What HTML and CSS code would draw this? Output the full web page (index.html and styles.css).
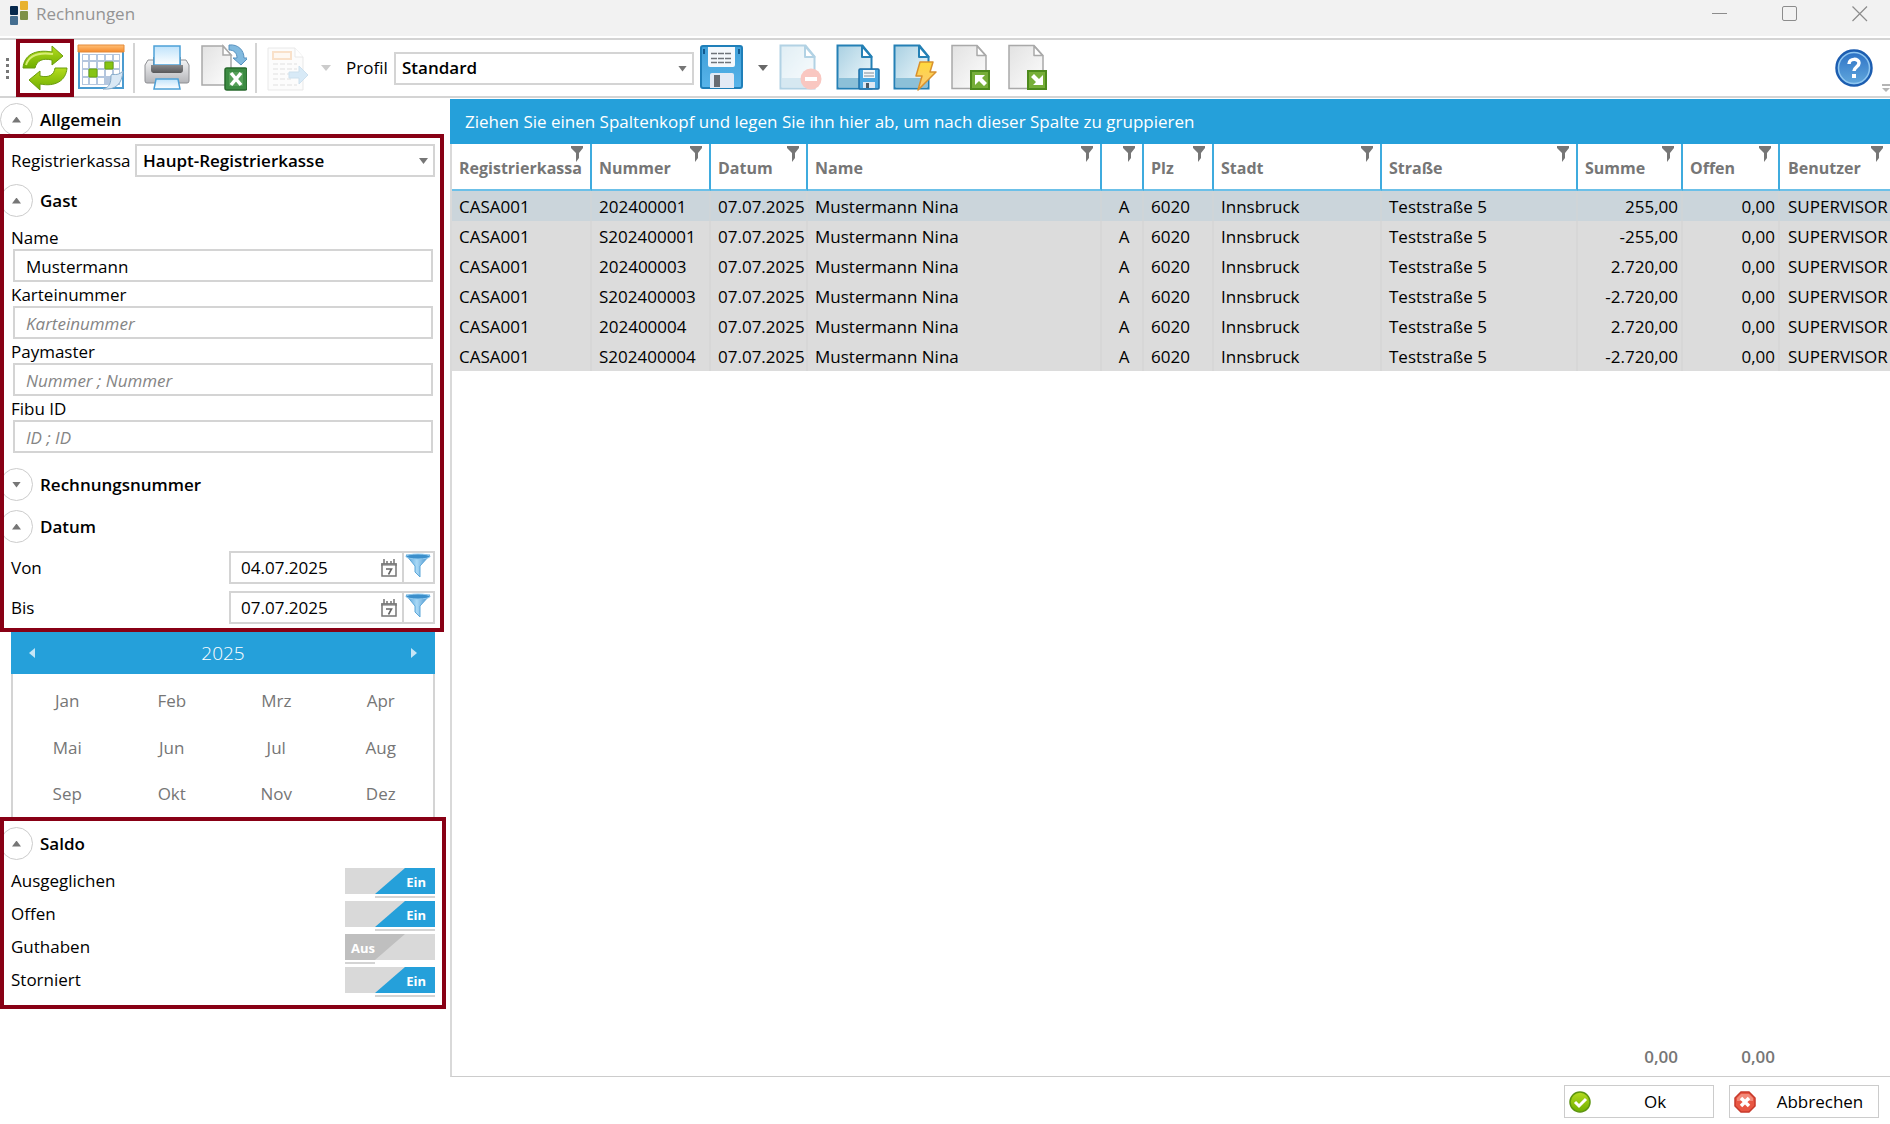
FILE: index.html
```html
<!DOCTYPE html>
<html lang="de">
<head>
<meta charset="utf-8">
<title>Rechnungen</title>
<link rel="stylesheet" href="styles.css">
</head>
<body>
<svg class="defs" width="0" height="0" aria-hidden="true">
  <defs>
    <linearGradient id="green" x1="0" y1="0" x2="0" y2="1"><stop offset="0" stop-color="#b5dc1e"/><stop offset="1" stop-color="#6fae00"/></linearGradient>
    <linearGradient id="paper" x1="0" y1="0" x2="1" y2="1"><stop offset="0" stop-color="#e2e2e2"/><stop offset="1" stop-color="#fdfdfd"/></linearGradient>
    <linearGradient id="bluepaper" x1="0" y1="0" x2="1" y2="1"><stop offset="0" stop-color="#a9d0e2"/><stop offset="1" stop-color="#f2fafd"/></linearGradient>
    <linearGradient id="blue" x1="0" y1="0" x2="0" y2="1"><stop offset="0" stop-color="#3f9fd8"/><stop offset="1" stop-color="#58b4ea"/></linearGradient>
    <linearGradient id="sky" x1="0" y1="0" x2="0" y2="1"><stop offset="0" stop-color="#bfe3fb"/><stop offset="1" stop-color="#ffffff"/></linearGradient>
    <linearGradient id="orange" x1="0" y1="0" x2="0" y2="1"><stop offset="0" stop-color="#ffc078"/><stop offset="1" stop-color="#f58a2c"/></linearGradient>
    <linearGradient id="metal" x1="0" y1="0" x2="0" y2="1"><stop offset="0" stop-color="#f4f4f5"/><stop offset="1" stop-color="#b4b5b9"/></linearGradient>
    <linearGradient id="dark" x1="0" y1="0" x2="0" y2="1"><stop offset="0" stop-color="#8a8a8c"/><stop offset="1" stop-color="#58585a"/></linearGradient>
    <linearGradient id="help" x1="0" y1="0" x2="0" y2="1"><stop offset="0" stop-color="#2a6fc4"/><stop offset="1" stop-color="#64aade"/></linearGradient>
    <linearGradient id="bolt" x1="0" y1="0" x2="0" y2="1"><stop offset="0" stop-color="#ffd93b"/><stop offset="1" stop-color="#fbc77a"/></linearGradient>
    <linearGradient id="funnel" x1="0" y1="0" x2="1" y2="0"><stop offset="0" stop-color="#4b9ad4"/><stop offset=".45" stop-color="#a9d9f6"/><stop offset="1" stop-color="#3886c4"/></linearGradient>
    <symbol id="i-filter" viewBox="0 0 12 16"><path d="M0 0h12v2L8 7v5l-3 4V7L0 2z" fill="#767676"/></symbol>
    <symbol id="i-funnel" viewBox="0 0 26 26"><path d="M1 2l9 11v6l5 5v-11L25 2z" fill="url(#funnel)" stroke="#5da7d9"/><ellipse cx="13" cy="3.500" rx="12" ry="2.500" fill="#3c8fcb" stroke="#8fcaf0"/></symbol>
    <symbol id="i-date" viewBox="0 0 16 18"><path d="M1 5h14v12H1z" fill="none" stroke="#767676" stroke-width="1.500"/><path d="M0 4h16v3H0z" fill="#767676" opacity=".55"/><path d="M3 0v5M6 2v3M10 2v3M13 0v5" stroke="#767676" stroke-width="1.500"/><path d="M5 10h5.500L7.500 15.500" fill="none" stroke="#666" stroke-width="1.600"/></symbol>
    <symbol id="i-bluedoc" viewBox="0 0 48 48"><path d="M2.500 1.500h25l9 11v32h-34z" fill="url(#bluepaper)" stroke="#2480b5" stroke-width="2"/><path d="M4 34h31v9H4z" fill="#8cc0d8"/><path d="M27 2v11h9.500z" fill="#fff" stroke="#2480b5" stroke-width="2" stroke-linejoin="round"/></symbol>
    <symbol id="i-greydoc" viewBox="0 0 48 48"><path d="M3 1.500h25l9 10v33H3z" fill="url(#paper)" stroke="#a9a9a9" stroke-width="1.500"/><path d="M28 2v9.500h8.500z" fill="#fff" stroke="#a9a9a9" stroke-width="1.500" stroke-linejoin="round"/></symbol>
  </defs>
</svg>

<header class="titlebar">
  <svg width="18" height="25" viewBox="0 0 18 25" aria-hidden="true"><rect x="10" y="1" width="8" height="9" rx="1" fill="#e8b22e"/><rect y="6" width="8" height="9" rx="1" fill="#06294d"/><rect x="10" y="11" width="8" height="9" rx="1" fill="#7e9148"/><rect y="16" width="8" height="9" rx="1" fill="#456e90"/></svg>
  <h1>Rechnungen</h1>
  <div class="winbuttons">
    <button type="button" aria-label="Minimieren"><svg width="16" height="16"><path d="M0 7.500h15" stroke="#8c8c8c"/></svg></button>
    <button type="button" aria-label="Maximieren"><svg width="16" height="16"><rect x=".5" y=".5" width="14" height="14" rx="1.500" fill="none" stroke="#8c8c8c"/></svg></button>
    <button type="button" aria-label="Schließen"><svg width="16" height="16"><path d="M.5.5l14.500 14.500M15 .5L.5 15" stroke="#8c8c8c" stroke-width="1.200"/></svg></button>
  </div>
</header>

<div class="toolbar" role="toolbar" aria-label="Werkzeuge">
  <div class="grip"><i></i><i></i><i></i><i></i></div>
  <button type="button" class="tool marked" aria-label="Aktualisieren"><svg viewBox="0 0 48 48"><g fill="url(#green)" stroke="#6a9c0c" stroke-linejoin="round"><path d="M2 24C3 11 14 5 31 8V2l11 10-11 9v-5c-9-2-15 0-17 8z"/><path d="M46 24C45 37 34 43 19 40v6L8 36l11-9v5c9 2 14-1 15-8z"/></g><path d="M5 21C8 11 17 8 32 10" fill="none" stroke="#d7ee74" stroke-width="2"/></svg></button>
  <button type="button" class="tool next" aria-label="Kalender"><svg viewBox="0 0 48 48"><path d="M2 3h44v41H2z" fill="#fff" stroke="#4b9bd0" stroke-width="2"/><path d="M1 1h46v7H1z" fill="url(#orange)" stroke="#e48a38"/><path d="M5 10h38v31H5z" fill="#b4c6de"/><path d="M6 11h5v5H6zm7 0h6v5h-6zm8 0h6v5h-6zm8 0h6v5h-6zm8 0h5v5h-5zM6 18h5v6H6zm7 0h6v6h-6zm8 0h6v6h-6zm16 0h5v6h-5zM6 26h5v6H6zm15 0h6v6h-6zm8 0h6v6h-6zm8 0h5v6h-5zM6 34h5v6H6zm7 0h6v6h-6zm8 0h6v6h-6z" fill="#fff"/><path d="M28 18h8v7h-8zM12 25h8v8h-8z" fill="#86c414" stroke="#6ca50c"/><path d="M46 27c-6 6-10 2-12 4 0 8-1 12-8 14 13 1 19-5 20-18z" fill="#d9e8f5" stroke="#85aac9"/></svg></button>
  <span class="sep"></span>
  <button type="button" class="tool printer" aria-label="Drucken"><svg viewBox="0 0 48 48"><path d="M5 16h38l3 5v16q0 2-2 2H4q-2 0-2-2V21z" fill="url(#metal)" stroke="#8e8f93"/><path d="M10 13h28v16H10z" fill="url(#dark)"/><path d="M11 2h26v19H11z" fill="url(#sky)" stroke="#4da1d8" stroke-width="1.500"/><path d="M8 21h32v5q0 3-3 3H11q-3 0-3-3z" fill="url(#dark)"/><path d="M13 35h22l2 10H11z" fill="url(#sky)" stroke="#4da1d8" stroke-width="1.500"/></svg></button>
  <button type="button" class="tool excel" aria-label="Nach Excel exportieren"><svg viewBox="0 0 48 48"><path d="M3 2h21l8 9v30H3z" fill="url(#paper)" stroke="#a9a9a9" stroke-width="1.500"/><path d="M24 2v9h8z" fill="#fff" stroke="#a9a9a9" stroke-width="1.500"/><path d="M30 1c9-1 15 5 15 13h4l-7 7-8-7h4c0-5-3-8-8-8z" fill="#82badf" stroke="#5791bf"/><rect x="26" y="24" width="22" height="22" rx="2" fill="#3c8b42" stroke="#27692d" stroke-width="1.500"/><path d="M30 28h14v14H30z" fill="#559f58"/><path d="M32 29l10 12M42 29L32 41" stroke="#fff" stroke-width="3.500"/></svg></button>
  <span class="sep"></span>
  <button type="button" class="tool printer faded" aria-label="Beleg weiterleiten" disabled><svg viewBox="0 0 48 48"><path d="M3 4h27l8 9v33H3z" fill="#f4f4f4" stroke="#a9a9a9"/><path d="M30 4v9h8" fill="#fff" stroke="#a9a9a9"/><path d="M8 8h18v7H8z" fill="#fde6cc" stroke="#e98b2f" stroke-width="2"/><path d="M8 20h24M8 25h24M8 30h18M8 35h18M8 41h24" stroke="#888" stroke-dasharray="5 2"/><path d="M24 28h10v-6l9 9-9 9v-6H24z" fill="#66aee0" stroke="#3d87bd"/></svg></button>
  <button type="button" class="drop faded-drop" aria-label="Weitere Belegaktionen" disabled></button>
  <label class="profil" for="profil">Profil</label>
  <span class="combo combo-profil"><select id="profil"><option>Standard</option></select></span>
  <button type="button" class="tool save" aria-label="Profil speichern"><svg viewBox="0 0 48 48"><rect x="3" y="2" width="41" height="42" rx="2" fill="url(#blue)" stroke="#1f7fb9" stroke-width="2"/><path d="M10 3h27v18q0 2-2 2H12q-2 0-2-2z" fill="#f4f8fc"/><path d="M13 9.500h21M13 14.500h21M13 18.500h21" stroke="#6f747a" stroke-width="1.500" stroke-dasharray="6 1"/><path d="M12 31q0-2 2-2h20q2 0 2 2v13H12z" fill="#e3eaf5"/><path d="M16 31h6v12h-6z" fill="#696d74"/><path d="M5 5h2v5H5zM40 5h2v5h-2z" fill="#125a8f"/></svg></button>
  <button type="button" class="drop save-drop" aria-label="Weitere Speicheroptionen"></button>
  <div class="profiltools">
    <button type="button" class="tool half" aria-label="Profil löschen" disabled><svg viewBox="0 0 48 48"><use href="#i-bluedoc"/><circle cx="33" cy="35" r="10.500" fill="#f0604f"/><path d="M27 35h12" stroke="#fff" stroke-width="4"/></svg></button>
    <button type="button" class="tool" aria-label="Profil speichern unter"><svg viewBox="0 0 48 48"><use href="#i-bluedoc"/><rect x="24" y="25" width="20" height="20" rx="1" fill="#4ba8e2" stroke="#1d6fa8" stroke-width="1.500"/><path d="M28 26h12v8H28z" fill="#f3f7fb"/><path d="M29 29h10M29 32h10" stroke="#7e8c98"/><path d="M28 38h12v6H28z" fill="#dfe8f3"/><path d="M31 39h3v5h-3z" fill="#4e5a66"/></svg></button>
    <button type="button" class="tool" aria-label="Profil umbenennen"><svg viewBox="0 0 48 48"><use href="#i-bluedoc"/><path d="M28 18h13l-3 10h6L26 46l4-14h-6z" fill="url(#bolt)" stroke="#d8912e" stroke-width="1.500" stroke-linejoin="round"/></svg></button>
    <button type="button" class="tool" aria-label="Profil importieren"><svg viewBox="0 0 48 48"><use href="#i-greydoc"/><rect x="22" y="27" width="18" height="18" fill="#76ae38" stroke="#4d8a1c" stroke-width="2"/><path d="M26 41V31h10l-3 3 5 5-3 3-5-5z" fill="#fff"/></svg></button>
    <button type="button" class="tool" aria-label="Profil exportieren"><svg viewBox="0 0 48 48"><use href="#i-greydoc"/><rect x="22" y="27" width="18" height="18" fill="#76ae38" stroke="#4d8a1c" stroke-width="2"/><path d="M37 31v10H27l3-3-5-5 3-3 5 5z" fill="#fff"/></svg></button>
  </div>
  <button type="button" class="helpbtn" aria-label="Hilfe"><svg viewBox="0 0 38 38"><circle cx="19" cy="19" r="17.500" fill="url(#help)" stroke="#1c5db0" stroke-width="2.500"/><circle cx="19" cy="19" r="15.500" fill="none" stroke="#8fc6f0" stroke-width="1.500"/><path d="M14 15c0-6 10-6 10-1 0 4-5 4-5 8" fill="none" stroke="#fff" stroke-width="3.500"/><path d="M17 25h4v4h-4z" fill="#fff"/></svg></button>
  <button type="button" class="overflow" aria-label="Weitere Symbole"><svg width="8" height="8"><path d="M0 1h8" stroke="#b4b4b4" stroke-width="2"/><path d="M0 4h8L4 8z" fill="#b4b4b4"/></svg></button>
</div>

<main class="content">
  <aside class="sidebar">
    <h2 class="section first"><button type="button" class="toggle-up" aria-label="Allgemein zuklappen"></button>Allgemein</h2>
    <section class="frame frame-filter">
      <div class="kassa"><label for="kassa">Registrierkassa</label><span class="combo combo-kassa"><select id="kassa"><option>Haupt-Registrierkasse</option></select></span></div>
      <h2 class="section"><button type="button" class="toggle-up" aria-label="Gast zuklappen"></button>Gast</h2>
      <div class="fields">
        <label for="f-name">Name</label><input type="text" id="f-name" value="Mustermann">
        <label for="f-kartei">Karteinummer</label><input type="text" id="f-kartei" placeholder="Karteinummer">
        <label for="f-pay">Paymaster</label><input type="text" id="f-pay" placeholder="Nummer ; Nummer">
        <label for="f-fibu">Fibu ID</label><input type="text" id="f-fibu" placeholder="ID ; ID">
      </div>
      <h2 class="section"><button type="button" class="toggle-down" aria-label="Rechnungsnummer aufklappen"></button>Rechnungsnummer</h2>
      <h2 class="section"><button type="button" class="toggle-up" aria-label="Datum zuklappen"></button>Datum</h2>
      <div class="dates">
        <div class="daterow"><label for="von">Von</label><span class="datebox"><input type="text" id="von" value="04.07.2025"><button type="button" aria-label="Kalender Von"><svg width="16" height="18"><use href="#i-date"/></svg></button></span><button type="button" class="datefilter" aria-label="Filter Von"><svg width="26" height="26"><use href="#i-funnel"/></svg></button></div>
        <div class="daterow"><label for="bis">Bis</label><span class="datebox"><input type="text" id="bis" value="07.07.2025"><button type="button" aria-label="Kalender Bis"><svg width="16" height="18"><use href="#i-date"/></svg></button></span><button type="button" class="datefilter" aria-label="Filter Bis"><svg width="26" height="26"><use href="#i-funnel"/></svg></button></div>
      </div>
    </section>
    <div class="calendar">
      <div class="calhead"><button type="button" aria-label="Voriges Jahr"><svg width="6" height="10"><path d="M6 0v10L0 5z" fill="#c6e6f6"/></svg></button><span>2025</span><button type="button" aria-label="Nächstes Jahr"><svg width="6" height="10"><path d="M0 0v10l6-5z" fill="#c6e6f6"/></svg></button></div>
      <div class="months">
        <button type="button">Jan</button><button type="button">Feb</button><button type="button">Mrz</button><button type="button">Apr</button>
        <button type="button">Mai</button><button type="button">Jun</button><button type="button">Jul</button><button type="button">Aug</button>
        <button type="button">Sep</button><button type="button">Okt</button><button type="button">Nov</button><button type="button">Dez</button>
      </div>
    </div>
    <section class="frame frame-saldo">
      <h2 class="section"><button type="button" class="toggle-up" aria-label="Saldo zuklappen"></button>Saldo</h2>
      <label class="switchrow">Ausgeglichen<span class="switch"><input type="checkbox" checked><b>Ein</b></span></label>
      <label class="switchrow">Offen<span class="switch"><input type="checkbox" checked><b>Ein</b></span></label>
      <label class="switchrow">Guthaben<span class="switch off"><input type="checkbox"><b>Aus</b></span></label>
      <label class="switchrow">Storniert<span class="switch"><input type="checkbox" checked><b>Ein</b></span></label>
    </section>
  </aside>

  <section class="grid">
    <div class="groupbar">Ziehen Sie einen Spaltenkopf und legen Sie ihn hier ab, um nach dieser Spalte zu gruppieren</div>
    <div class="gridbody">
      <table class="data">
        <colgroup><col class="c-kassa"><col class="c-nummer"><col class="c-datum"><col class="c-name"><col class="c-art"><col class="c-plz"><col class="c-stadt"><col class="c-strasse"><col class="c-summe"><col class="c-offen"><col class="c-benutzer"></colgroup>
        <thead><tr>
          <th>Registrierkassa<svg><use href="#i-filter"/></svg></th><th>Nummer<svg><use href="#i-filter"/></svg></th><th>Datum<svg><use href="#i-filter"/></svg></th><th>Name<svg><use href="#i-filter"/></svg></th><th><svg><use href="#i-filter"/></svg></th><th>Plz<svg><use href="#i-filter"/></svg></th><th>Stadt<svg><use href="#i-filter"/></svg></th><th>Straße<svg><use href="#i-filter"/></svg></th><th>Summe<svg><use href="#i-filter"/></svg></th><th>Offen<svg><use href="#i-filter"/></svg></th><th>Benutzer<svg><use href="#i-filter"/></svg></th>
        </tr></thead>
        <tbody>
          <tr class="selected"><td>CASA001</td><td>202400001</td><td>07.07.2025</td><td>Mustermann Nina</td><td class="mid">A</td><td>6020</td><td>Innsbruck</td><td>Teststraße 5</td><td class="num">255,00</td><td class="num">0,00</td><td>SUPERVISOR</td></tr>
          <tr><td>CASA001</td><td>S202400001</td><td>07.07.2025</td><td>Mustermann Nina</td><td class="mid">A</td><td>6020</td><td>Innsbruck</td><td>Teststraße 5</td><td class="num">-255,00</td><td class="num">0,00</td><td>SUPERVISOR</td></tr>
          <tr><td>CASA001</td><td>202400003</td><td>07.07.2025</td><td>Mustermann Nina</td><td class="mid">A</td><td>6020</td><td>Innsbruck</td><td>Teststraße 5</td><td class="num">2.720,00</td><td class="num">0,00</td><td>SUPERVISOR</td></tr>
          <tr><td>CASA001</td><td>S202400003</td><td>07.07.2025</td><td>Mustermann Nina</td><td class="mid">A</td><td>6020</td><td>Innsbruck</td><td>Teststraße 5</td><td class="num">-2.720,00</td><td class="num">0,00</td><td>SUPERVISOR</td></tr>
          <tr><td>CASA001</td><td>202400004</td><td>07.07.2025</td><td>Mustermann Nina</td><td class="mid">A</td><td>6020</td><td>Innsbruck</td><td>Teststraße 5</td><td class="num">2.720,00</td><td class="num">0,00</td><td>SUPERVISOR</td></tr>
          <tr><td>CASA001</td><td>S202400004</td><td>07.07.2025</td><td>Mustermann Nina</td><td class="mid">A</td><td>6020</td><td>Innsbruck</td><td>Teststraße 5</td><td class="num">-2.720,00</td><td class="num">0,00</td><td>SUPERVISOR</td></tr>
        </tbody>
      </table>
      <div class="totals"><span class="c-summe">0,00</span><span class="c-offen">0,00</span></div>
    </div>
  </section>
</main>

<footer class="actions">
  <button type="button"><svg viewBox="0 0 22 22"><circle cx="11" cy="11" r="10" fill="url(#green)" stroke="#5c9410" stroke-width="1.500"/><path d="M6 11l4 4 7-7" fill="none" stroke="#fff" stroke-width="3"/></svg><span>Ok</span></button>
  <button type="button"><svg viewBox="0 0 22 22"><path d="M7 1h8l6 6v8l-6 6H7l-6-6V7z" fill="#e85743" stroke="#c73a2c" stroke-width="1.500"/><path d="M3 7l4-4h8l4 4v3H3z" fill="#f28a7a"/><path d="M7 7l8 8M15 7l-8 8" stroke="#fff" stroke-width="3.500"/></svg><span>Abbrechen</span></button>
</footer>
</body>
</html>
```
FILE: styles.css
```css
* { box-sizing: border-box; }

:root {
  --accent: #25a0da;
  --line: #d4d4d4;
  --grey: #767676;
  --mark: #880015;
}

body {
  margin: 0;
  min-height: 100vh;
  display: flex;
  flex-direction: column;
  overflow-x: hidden;
  background: #fff;
  color: #000;
  font: 17px/24px "Open Sans", "Noto Sans", sans-serif;
}

button, input, select { font: inherit; color: inherit; margin: 0; }
button { padding: 0; border: 0; background: none; }
svg { display: block; }
.defs { position: absolute; }

/* Title bar */
.titlebar {
  display: flex;
  align-items: flex-start;
  height: 36px;
  padding-left: 10px;
  background: #f2f2f2;
  color: #949494;
}
.titlebar h1 { margin: 2px 0 0 8px; font-size: 17px; font-weight: 400; }
.winbuttons { display: flex; gap: 54px; margin: 6px 22px 0 auto; }

/* Toolbar */
.toolbar {
  display: flex;
  align-items: center;
  height: 60px;
  margin-top: 2px;
  border: solid var(--line);
  border-width: 2px 0;
}
.grip { display: flex; flex-direction: column; gap: 3px; width: 16px; padding-left: 6px; }
.grip i { width: 3px; height: 3px; background: #777; }
.tool { flex: none; width: 48px; height: 48px; }
.tool svg { width: 48px; height: 48px; }
.marked { width: 58px; height: 58px; margin: -1px 0; border: 4px solid var(--mark); background: #fff; }
.marked svg { margin: 0 auto; }
.next { margin-left: 3px; }
.sep { flex: none; width: 2px; height: 50px; margin-left: 8px; background: var(--line); }
.printer, .excel { margin-left: 8px; }
.faded { opacity: .25; }
.half { opacity: .35; }
.drop { flex: none; width: 10px; height: 6px; background: #686868; clip-path: polygon(0 0, 100% 0, 50% 100%); }
.faded-drop { margin-left: 8px; background: #ccc; }
.profil { flex: none; width: 48px; margin-left: 15px; }
.combo { position: relative; display: block; height: 33px; }
.combo::after {
  content: "";
  position: absolute;
  right: 7px;
  top: 14px;
  width: 9px;
  height: 6px;
  background: #767676;
  clip-path: polygon(0 0, 100% 0, 50% 100%);
  pointer-events: none;
}
.combo select {
  appearance: none;
  width: 100%;
  height: 100%;
  padding: 0 24px 0 6px;
  border: 2px solid var(--line);
  border-radius: 0;
  background: #fff;
  font-size: 17px;
  font-weight: 600;
}
.combo-profil { flex: none; width: 300px; }
.save { margin-left: 4px; }
.save-drop { margin-left: 12px; }
.profiltools { display: flex; gap: 9px; margin-left: 10px; }
.helpbtn { width: 38px; height: 38px; margin-left: auto; }
.overflow { align-self: flex-end; margin: 0 0 4px 9px; }

/* Main area */
.content { flex: 1; display: flex; padding-top: 1px; }
.sidebar { flex: none; width: 450px; }
.section {
  display: flex;
  align-items: center;
  gap: 7px;
  height: 33px;
  margin: 0;
  font-size: 17px;
  font-weight: 600;
}
.section button {
  flex: none;
  display: grid;
  place-items: center;
  width: 33px;
  height: 33px;
  border: 1px solid #ccc;
  border-radius: 50%;
}
.section button::before { content: ""; width: 9px; height: 6px; background: var(--grey); }
.toggle-up::before { clip-path: polygon(50% 0, 100% 100%, 0 100%); }
.toggle-down::before { clip-path: polygon(0 0, 100% 0, 50% 100%); }
.section.first { margin: 4px 0 -2px; }
.frame { position: relative; border: 4px solid var(--mark); background: #fff; overflow: hidden; }
.frame .section { margin-left: -4px; }
.frame-filter { width: 444px; padding-top: 6px; }
.kassa { display: flex; align-items: center; justify-content: space-between; margin: 0 5px 7px 7px; }
.combo-kassa { width: 300px; }
.fields { display: flex; flex-direction: column; margin: 8px 7px 15px; }
.fields label { height: 24px; line-height: 26px; }
.fields input {
  height: 33px;
  margin-left: 2px;
  padding: 1px 11px 0;
  border: 2px solid var(--line);
}
.fields input::placeholder { color: #858585; font-style: italic; }
.fields + .section { margin-bottom: 9px; }
.dates { display: grid; gap: 7px; margin: 8px 5px 4px 7px; }
.daterow { display: flex; align-items: center; }
.daterow label { flex: 1; }
.datebox { display: flex; align-items: center; width: 175px; height: 33px; padding: 0 5px 0 10px; border: 2px solid var(--line); }
.datebox input { flex: 1; min-width: 0; padding: 0; border: 0; outline: 0; }
.datefilter { display: grid; justify-items: center; width: 33px; height: 33px; margin-left: -2px; padding-right: 1px; border: 2px solid var(--line); }

/* Year calendar */
.calendar { width: 424px; margin-left: 11px; }
.calhead {
  display: flex;
  align-items: center;
  justify-content: space-between;
  height: 42px;
  padding: 0 18px;
  background: var(--accent);
  color: #fff;
  font-size: 19px;
  font-weight: 300;
}
.months {
  display: grid;
  grid-template-columns: repeat(4, 1fr);
  grid-template-rows: 47px 47px 46px;
  padding: 3px 0 0 2px;
  border: solid var(--line);
  border-width: 0 2px;
  color: var(--grey);
}

/* Balance switches */
.frame-saldo { width: 446px; padding: 6px 0 8px; }
.frame-saldo .section { margin-bottom: 5px; }
.switchrow { display: flex; justify-content: space-between; height: 33px; padding: 0 7px; line-height: 31px; }
.switch { display: grid; grid-template-rows: 26px; width: 90px; height: 26px; margin-top: 3px; }
.switch > * { grid-area: 1 / 1; }
.switch input { appearance: none; position: relative; margin: 0; background: #d9d9d9; }
.switch input::before {
  content: "";
  position: absolute;
  inset: 0;
  background: #bfbfbf;
  clip-path: polygon(0 0, 60px 0, 30px 100%, 0 100%);
}
.switch input:checked::before {
  background: var(--accent);
  clip-path: polygon(60px 0, 100% 0, 100% 100%, 30px 100%);
}
.switch input::after { content: ""; position: absolute; left: 0; top: 28px; width: 30px; height: 2px; background: #d4d4d4; }
.switch input:checked::after { left: 30px; width: 60px; }
.switch b { z-index: 1; justify-self: end; padding-right: 9px; color: #fff; font-size: 13px; line-height: 28px; pointer-events: none; }
.switch.off b { justify-self: start; padding: 0 0 0 6px; }

/* Invoice grid */
.grid { flex: 1; min-width: 0; display: flex; flex-direction: column; }
.groupbar { height: 45px; padding: 0 15px; background: var(--accent); color: #fff; line-height: 45px; white-space: nowrap; }
.gridbody {
  flex: 1;
  display: flex;
  flex-direction: column;
  justify-content: space-between;
  overflow: hidden;
  border-left: 2px solid #d9d9d9;
  border-bottom: 1px solid #ccc;
}
.data { width: calc(100% + 2px); table-layout: fixed; border-collapse: separate; border-spacing: 0; }
.c-kassa { width: 140px; }
.c-nummer { width: 119px; }
.c-datum { width: 97px; }
.c-art { width: 42px; }
.c-plz { width: 70px; }
.c-stadt { width: 168px; }
.c-strasse { width: 196px; }
.c-summe { width: 105px; }
.c-offen { width: 97px; }
.c-benutzer { width: 112px; }
.data th {
  position: relative;
  height: 47px;
  padding: 2px 0 0 7px;
  border-right: 2px solid #3fabde;
  border-bottom: 2px solid #6cc0e8;
  color: var(--grey);
  font-size: 16px;
  font-weight: 700;
  text-align: left;
  white-space: nowrap;
}
.data th svg { position: absolute; top: 2px; right: 7px; width: 12px; height: 16px; }
.data td {
  height: 30px;
  padding: 2px 0 0 7px;
  border-right: 2px solid #d7d7d7;
  background: #dcdcdc;
  white-space: nowrap;
}
.data .selected td { background: #cbd5db; border-color: #cfd5d8; }
.data .num { padding: 2px 3px 0 0; text-align: right; }
.data .mid { padding: 2px 0 0 4px; text-align: center; }
.data th:last-child, .data td:last-child { padding-left: 8px; border-right: 0; }
.data th:last-child svg { right: 9px; }
.totals { display: flex; justify-content: flex-end; padding: 0 110px 7px 0; color: var(--grey); font-weight: 600; text-align: right; }
.totals span { padding-right: 5px; }

/* Dialog buttons */
.actions { display: flex; justify-content: flex-end; gap: 15px; padding: 8px 11px 6px 0; }
.actions button { display: flex; align-items: center; width: 150px; height: 33px; padding-left: 4px; border: 1px solid #ccc; }
.actions svg { width: 22px; height: 22px; }
.actions span { flex: 1; padding-left: 6px; text-align: center; }
```
